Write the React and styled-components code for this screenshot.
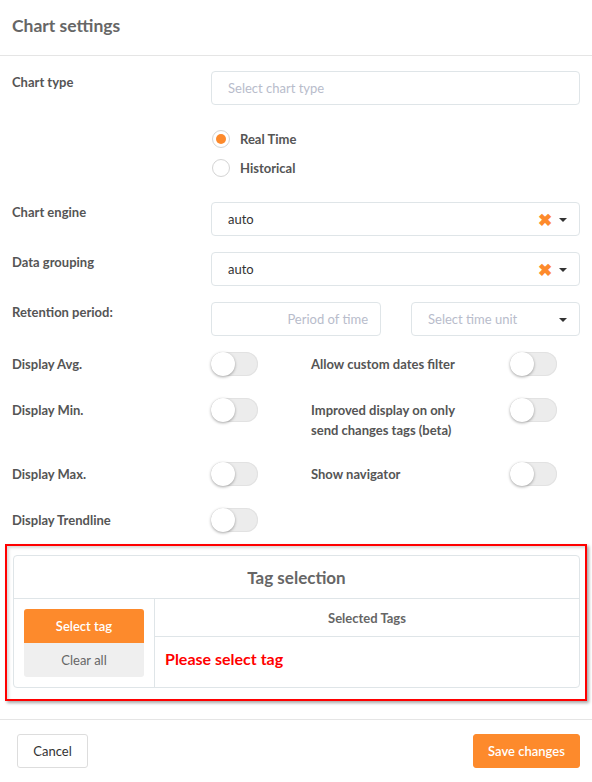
import { Fragment } from "react";
import styled, { createGlobalStyle } from "styled-components";

const GlobalStyle = createGlobalStyle`
  body {
    margin: 0;
    background: #fff;
    font-family: "Source Sans Pro", Lato, "Open Sans", sans-serif;
    color: #555;
  }
`;

const ORANGE = "#fd8a2c";
const BORDER = "#dfe5e8";

const Modal = styled.div`
  width: 592px;
  height: 782px;
  background: #fff;
  display: flex;
  flex-direction: column;
`;

const Header = styled.div`
  border-bottom: 1px solid #e5e5e5;
  display: flex;
  align-items: center;
  padding: 0 12px;
  box-sizing: border-box;
  height: 56px;
`;

const Title = styled.h4`
  margin: 0 0 4px;
  font-size: 17.5px;
  font-weight: 700;
  color: #666;
`;

const Body = styled.div`
  padding: 15px 12px 0;
  flex: 1;
`;

const FormRow = styled.div`
  display: grid;
  grid-template-columns: 199px 1fr;
  align-items: start;
  margin-bottom: ${(p) => p.$mb ?? 16}px;
`;

const Label = styled.label`
  font-size: 13px;
  font-weight: 700;
  color: #555;
  line-height: 20px;
  padding-top: ${(p) => p.$pt ?? 0}px;
`;

const Field = styled.div`
  height: 34px;
  box-sizing: border-box;
  border: 1px solid ${BORDER};
  border-radius: 4px;
  display: flex;
  align-items: center;
  padding: 0 12px 0 16px;
  font-size: 13px;
  color: ${(p) => (p.$placeholder ? "#b8bccb" : "#333")};
  justify-content: ${(p) => (p.$right ? "flex-end" : "flex-start")};
`;

const FieldText = styled.span`
  flex: ${(p) => (p.$grow ? 1 : "none")};
`;

const Clear = styled.span`
  color: ${ORANGE};
  font-size: 17px;
  font-weight: 900;
  margin-right: 7px;
  line-height: 1;
`;

const Caret = styled.span`
  width: 0;
  height: 0;
  border-left: 4px solid transparent;
  border-right: 4px solid transparent;
  border-top: 4px solid #333;
  margin-top: 2px;
`;

const SplitFields = styled.div`
  display: grid;
  grid-template-columns: 170px 169px;
  justify-content: space-between;
`;

const RadioGroup = styled.div`
  display: flex;
  flex-direction: column;
  gap: 11px;
`;

const RadioItem = styled.div`
  display: flex;
  align-items: center;
  gap: 10px;
  font-size: 13px;
  font-weight: 700;
  color: #555;
  padding-left: 1px;
`;

const RadioDot = styled.span`
  width: 18px;
  height: 18px;
  border-radius: 50%;
  border: 1px solid #d4d4d4;
  box-sizing: border-box;
  display: flex;
  align-items: center;
  justify-content: center;
  &::after {
    content: "";
    width: 10px;
    height: 10px;
    border-radius: 50%;
    background: ${(p) => (p.$on ? ORANGE : "transparent")};
  }
`;

const ToggleGrid = styled.div`
  display: grid;
  grid-template-columns: 199px 100px 199px auto;
  align-items: start;
  row-gap: ${(p) => p.$gap}px;
  margin-top: 16px;
`;

const ToggleLabel = styled.span`
  font-size: 13px;
  font-weight: 700;
  color: #555;
  line-height: 20px;
  padding-top: 2px;
  max-width: 160px;
`;

const Toggle = styled.span`
  width: 47px;
  height: 24px;
  border-radius: 12px;
  background: #ececec;
  box-shadow: inset 0 0 0 1px #e2e2e2;
  position: relative;
  display: block;
  &::after {
    content: "";
    position: absolute;
    left: 0;
    top: 0;
    width: 24px;
    height: 24px;
    border-radius: 50%;
    background: #fff;
    box-shadow: 0 1px 3px rgba(0, 0, 0, 0.35);
  }
`;

const Highlight = styled.div`
  margin: 12px -7px 0 -7px;
  border: 2px solid #f00;
  padding: 9px 5px 11px 6px;
  box-shadow: 2px 2px 3px rgba(0, 0, 0, 0.35),
    inset 2px 2px 3px rgba(0, 0, 0, 0.15);
`;

const TagPanel = styled.div`
  border: 1px solid ${BORDER};
  border-radius: 4px;
`;

const TagHeader = styled.div`
  height: 42px;
  border-bottom: 1px solid ${BORDER};
  display: flex;
  align-items: center;
  justify-content: center;
  font-size: 17px;
  font-weight: 700;
  color: #666;
`;

const TagBody = styled.div`
  display: grid;
  grid-template-columns: 141px 1fr;
`;

const TagActions = styled.div`
  border-right: 1px solid ${BORDER};
  padding: 10px;
  display: flex;
  flex-direction: column;
`;

const TagButton = styled.button`
  height: 34px;
  border: none;
  font-family: inherit;
  font-size: 13px;
  border-radius: ${(p) => (p.$primary ? "3px 3px 0 0" : "0 0 3px 3px")};
  background: ${(p) => (p.$primary ? ORANGE : "#efefef")};
  color: ${(p) => (p.$primary ? "#fff" : "#666")};
  font-weight: ${(p) => (p.$primary ? 600 : 400)};
`;

const TagList = styled.div`
  display: flex;
  flex-direction: column;
`;

const TagListHead = styled.div`
  height: 37px;
  border-bottom: 1px solid ${BORDER};
  display: flex;
  align-items: center;
  justify-content: center;
  font-size: 13px;
  font-weight: 700;
  color: #666;
`;

const Warning = styled.div`
  padding: 12px 10px 13px;
  color: #f00;
  font-size: 16px;
  font-weight: 700;
`;

const Footer = styled.div`
  border-top: 1px solid #e5e5e5;
  height: 62px;
  padding: 0 12px 0 17px;
  display: flex;
  align-items: center;
  justify-content: space-between;
`;

const FooterButton = styled.button`
  height: 34px;
  padding: 0;
  white-space: nowrap;
  font-family: inherit;
  font-size: 13px;
  border-radius: 3px;
  border: 1px solid ${(p) => (p.$primary ? ORANGE : "#ddd")};
  background: ${(p) => (p.$primary ? ORANGE : "#fff")};
  color: ${(p) => (p.$primary ? "#fff" : "#333")};
  font-weight: ${(p) => (p.$primary ? 600 : 400)};
  width: ${(p) => p.$w}px;
`;

function SelectField({ value }) {
  return (
    <Field>
      <FieldText $grow>{value}</FieldText>
      <Clear>✖</Clear>
      <Caret />
    </Field>
  );
}

const toggles = [
  ["Display Avg.", "Allow custom dates filter"],
  ["Display Min.", "Improved display on only send changes tags (beta)"],
  ["Display Max.", "Show navigator"],
  ["Display Trendline", null],
];

export default function App() {
  return (
    <Modal>
      <GlobalStyle />
      <Header>
        <Title>Chart settings</Title>
      </Header>
      <Body>
        <FormRow $mb={25}>
          <Label $pt={1}>Chart type</Label>
          <Field $placeholder>Select chart type</Field>
        </FormRow>
        <FormRow $mb={25}>
          <span />
          <RadioGroup>
            <RadioItem>
              <RadioDot $on />
              Real Time
            </RadioItem>
            <RadioItem>
              <RadioDot />
              Historical
            </RadioItem>
          </RadioGroup>
        </FormRow>
        <FormRow>
          <Label>Chart engine</Label>
          <SelectField value="auto" />
        </FormRow>
        <FormRow>
          <Label>Data grouping</Label>
          <SelectField value="auto" />
        </FormRow>
        <FormRow $mb={0}>
          <Label>Retention period:</Label>
          <SplitFields>
            <Field $placeholder $right>
              <FieldText>Period of time</FieldText>
            </Field>
            <Field $placeholder>
              <FieldText $grow>Select time unit</FieldText>
              <Caret />
            </Field>
          </SplitFields>
        </FormRow>
        <ToggleGrid $gap={22}>
          {toggles.map(([left, right]) => (
            <Fragment key={left}>
              <ToggleLabel>{left}</ToggleLabel>
              <Toggle />
              {right ? <ToggleLabel>{right}</ToggleLabel> : <span />}
              {right ? <Toggle /> : <span />}
            </Fragment>
          ))}
        </ToggleGrid>
        <Highlight>
          <TagPanel>
            <TagHeader>Tag selection</TagHeader>
            <TagBody>
              <TagActions>
                <TagButton $primary>Select tag</TagButton>
                <TagButton>Clear all</TagButton>
              </TagActions>
              <TagList>
                <TagListHead>Selected Tags</TagListHead>
                <Warning>Please select tag</Warning>
              </TagList>
            </TagBody>
          </TagPanel>
        </Highlight>
      </Body>
      <Footer>
        <FooterButton $w={71}>Cancel</FooterButton>
        <FooterButton $primary $w={107}>
          Save changes
        </FooterButton>
      </Footer>
    </Modal>
  );
}
